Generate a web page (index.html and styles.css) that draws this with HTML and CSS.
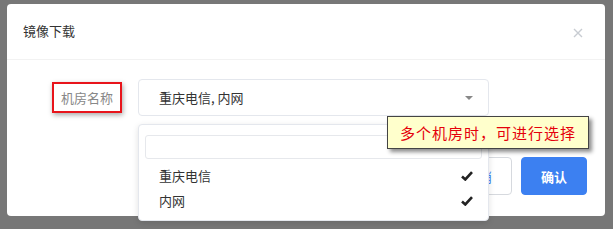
FILE: index.html
```html
<!DOCTYPE html>
<html lang="zh-CN">
<head>
    <meta charset="UTF-8">
    <meta name="viewport" content="width=device-width, initial-scale=1.0">
    <title>镜像下载</title>
    <link rel="stylesheet" href="styles.css">
</head>
<body>
    <div class="modal">
        <div class="modal-header">
            <span class="modal-title">镜像下载</span>
            <svg class="close-icon" width="10" height="10" viewBox="0 0 10 10">
                <path d="M1 1L9 9M9 1L1 9" stroke="#c8ccd2" stroke-width="1.4" fill="none"/>
            </svg>
        </div>
        <div class="modal-body">
            <div class="form-row">
                <div class="form-label">机房名称</div>
                <div class="select">
                    <span class="select-value">重庆电信, 内网</span>
                    <span class="select-arrow"></span>
                </div>
            </div>
        </div>
        <div class="modal-footer">
            <button class="btn btn-cancel">取消</button>
            <button class="btn btn-primary">确认</button>
        </div>

        <div class="dropdown">
            <div class="dropdown-search"></div>
            <div class="option">
                <span>重庆电信</span>
                <svg class="check" width="12" height="10" viewBox="0 0 12 10">
                    <path d="M1 5.5L4.3 8.5L11 1.2" stroke="#222" stroke-width="2.6" fill="none"/>
                </svg>
            </div>
            <div class="option">
                <span>内网</span>
                <svg class="check" width="12" height="10" viewBox="0 0 12 10">
                    <path d="M1 5.5L4.3 8.5L11 1.2" stroke="#222" stroke-width="2.6" fill="none"/>
                </svg>
            </div>
        </div>

        <div class="tooltip">多个机房时，可进行选择</div>
    </div>
</body>
</html>
```

FILE: styles.css
```css
body {
    margin: 0;
    background-color: #777;
    font-family: "Noto Sans CJK SC", "Noto Sans", sans-serif;
    height: 229px;
    overflow: hidden;
}
.modal {
    position: relative;
    margin: 4px 0 0 7px;
    width: 598px;
    height: 212px;
    background: white;
    border-radius: 4px;
}
.modal-header {
    height: 55px;
    padding: 0 22px 0 16px;
    display: flex;
    align-items: center;
    justify-content: space-between;
    border-bottom: 1px solid #f2f2f2;
}
.modal-title {
    font-size: 13px;
    color: #333;
    margin-top: -2px;
}
.close-icon {
    margin-top: 2px;
}
.modal-body {
    padding: 19px 0 0 45px;
}
.form-row {
    display: flex;
    align-items: center;
    gap: 16px;
}
.form-label {
    box-sizing: border-box;
    width: 70px;
    height: 31px;
    border: 2px solid #e8141b;
    box-shadow: 1px 2px 5px rgba(0, 0, 0, 0.35);
    font-size: 13px;
    color: #888;
    display: flex;
    align-items: center;
    justify-content: center;
}
.select {
    box-sizing: border-box;
    width: 351px;
    height: 37px;
    border: 1px solid #e4e7ed;
    border-radius: 4px;
    padding: 0 15px 0 20px;
    display: flex;
    align-items: center;
    justify-content: space-between;
}
.select-value {
    font-size: 13px;
    color: #333;
}
.select-arrow {
    width: 0;
    height: 0;
    border-left: 4px solid transparent;
    border-right: 4px solid transparent;
    border-top: 4px solid #888;
    margin-top: 1px;
}
.modal-footer {
    margin-top: 41px;
    padding-right: 18px;
    display: flex;
    justify-content: flex-end;
    gap: 9px;
}
.btn {
    width: 66px;
    height: 38px;
    border-radius: 4px;
    font-family: inherit;
    font-size: 13px;
}
.btn-cancel {
    background: white;
    border: 1px solid #d6d9de;
    color: #3b80f2;
}
.btn-primary {
    background: #3c80f1;
    border: 1px solid #3c80f1;
    color: white;
    font-weight: bold;
}
.dropdown {
    position: absolute;
    left: 131px;
    top: 120px;
    box-sizing: border-box;
    width: 351px;
    height: 97px;
    padding: 10px 6px 6px 6px;
    background: white;
    border: 1px solid #e4e7ed;
    border-radius: 4px;
    box-shadow: 0 2px 6px rgba(0, 0, 0, 0.12);
}
.dropdown-search {
    height: 24px;
    box-sizing: border-box;
    border: 1px solid #e6e8ec;
    border-radius: 3px;
    margin-bottom: 4px;
}
.option {
    height: 25px;
    padding: 0 9px 0 14px;
    display: flex;
    align-items: center;
    justify-content: space-between;
    font-size: 13px;
    color: #333;
}
.tooltip {
    position: absolute;
    left: 380px;
    top: 112px;
    box-sizing: border-box;
    width: 202px;
    height: 33px;
    background: #ffffcc;
    border: 1px solid #444;
    box-shadow: 3px 3px 4px rgba(0, 0, 0, 0.45);
    color: #e5000b;
    font-size: 15px;
    letter-spacing: 1px;
    display: flex;
    align-items: center;
    justify-content: center;
}
```
